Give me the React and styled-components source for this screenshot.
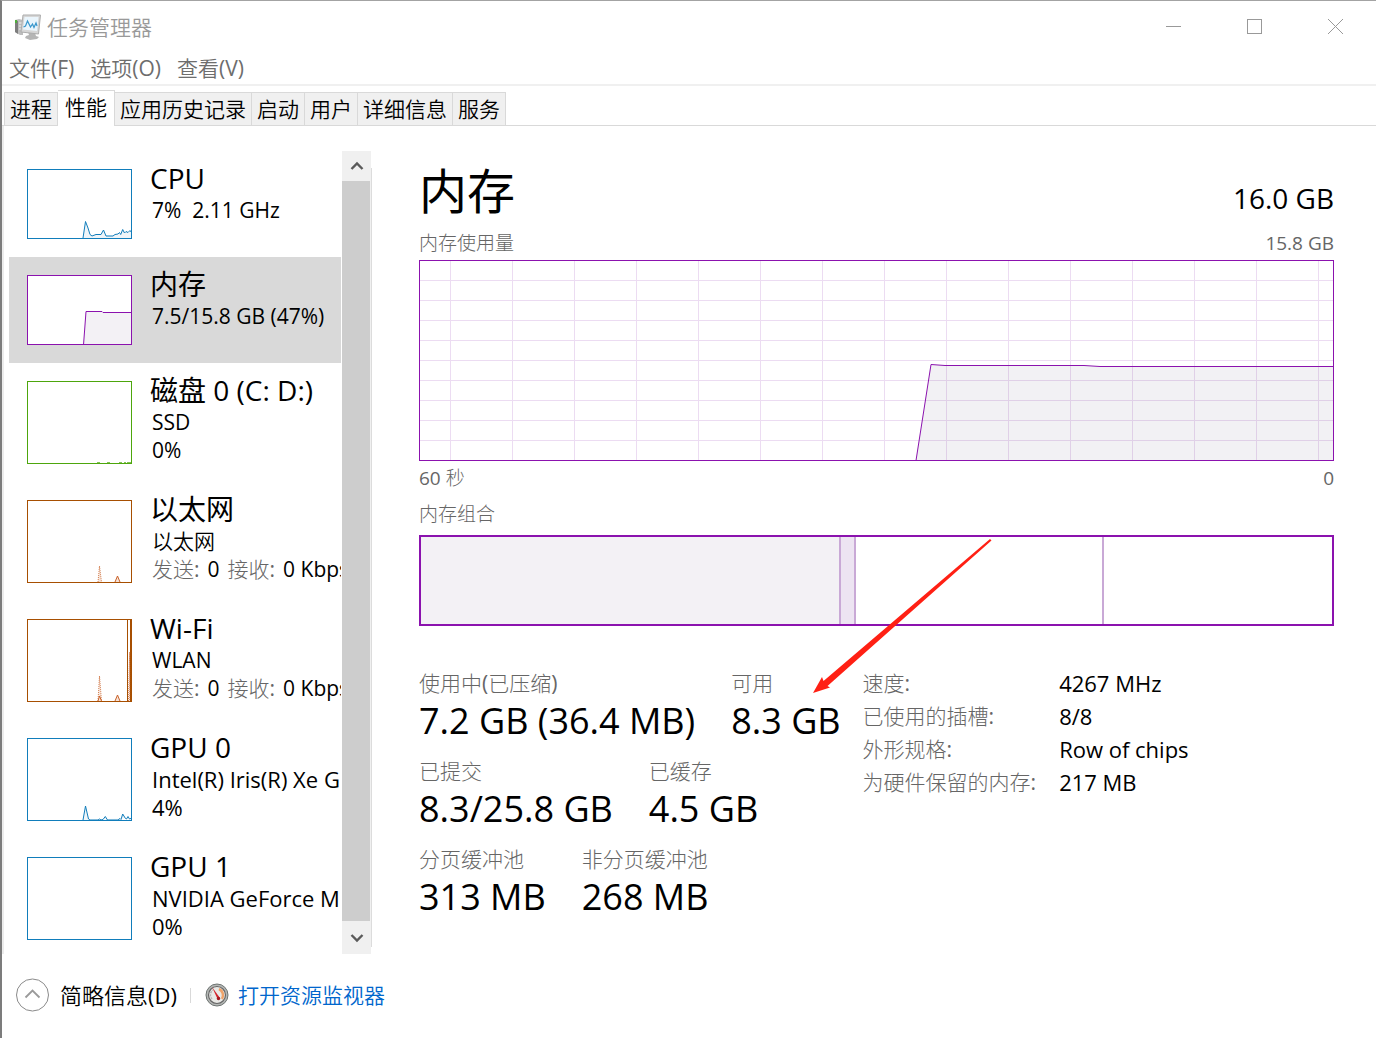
import React, {useRef, useState} from 'react'
import styled, {createGlobalStyle} from 'styled-components'

const thin = `'Open Sans', 'Noto Sans CJK SC Light', 'Noto Sans CJK SC', sans-serif`
const medium = `'Open Sans', 'Noto Sans CJK SC DemiLight', 'Noto Sans CJK SC', sans-serif`
const regular = `'Open Sans', 'Noto Sans CJK SC', sans-serif`

const GlobalStyle = createGlobalStyle`
  * {
    box-sizing: border-box;
  }
  body {
    margin: 0;
    background: #fff;
    color: #000;
    font-family: ${medium};
    font-size: 21px;
    line-height: 28px;
  }
  button {
    padding: 0;
    border: 0;
    background: none;
    color: inherit;
    font: inherit;
    text-align: left;
    cursor: default;
  }
`

const Window = styled.div`
  display: flex;
  flex-direction: column;
  height: 100vh;
  border-top: 1px solid #a3a3a3;
  border-left: 2px solid #7c7c7c;
`

const TitleBar = styled.header`
  display: flex;
  align-items: center;
  justify-content: space-between;
  height: 51px;
`

const Caption = styled.div`
  display: flex;
  align-items: center;
  gap: 6px;
  padding-left: 13px;
  color: #999;
`

const WindowButtons = styled.div`
  display: flex;
`

const WindowButton = styled.button`
  display: flex;
  align-items: center;
  justify-content: center;
  width: 81px;
  height: 51px;
  color: #999;
`

const MenuBar = styled.nav`
  display: flex;
  gap: 16px;
  height: 34px;
  padding: 0 7px;
  border-bottom: 2px solid #f0f0f0;
  color: #6d6d6d;
`

const TabBar = styled.div`
  display: flex;
  align-items: flex-end;
  height: 40px;
  padding-left: 2px;
  border-bottom: 1px solid #d9d9d9;
`

const Tab = styled.button`
  height: ${props => (props.$active ? 36 : 33)}px;
  margin-bottom: ${props => (props.$active ? -1 : 0)}px;
  padding: ${props => (props.$active ? '0 7px 3px' : '0 5px 1px')};
  border: 1px solid #d9d9d9;
  border-bottom: 0;
  border-left-width: ${props => (props.$first ? 1 : 0)}px;
  background: ${props => (props.$active ? '#fff' : '#f0f0f0')};
`

const Body = styled.main`
  display: flex;
  flex: 1;
  min-height: 0;
  padding: 25px 42px 0 5px;
  border-left: 2px solid #ececec;
`

const Sidebar = styled.aside`
  display: flex;
  flex: none;
  width: 363px;
`

const ResourceList = styled.div`
  flex: 1;
  min-width: 0;
  overflow: hidden;
`

const Resource = styled.button`
  display: flex;
  gap: 18px;
  width: 332px;
  padding: 18px 0 18px 18px;
  overflow: hidden;
  background: ${props => (props.$active ? '#d9d9d9' : 'transparent')};
`

const Thumb = styled.div`
  flex: none;
  width: 105px;
  height: ${props => props.$height}px;
  border: 1px solid ${props => props.$color};
  background: #fff;

  svg {
    display: block;
  }
`

const ResourceText = styled.div`
  display: flex;
  flex-direction: column;
  margin: -8px 0 -18px;
  white-space: pre;
`

const ResourceName = styled.span`
  font-family: ${regular};
  font-size: 28px;
  line-height: 35px;
`

const ResourceLine = styled.span`
  padding-left: 2px;
  font-size: ${props => props.$size}px;
`

const Muted = styled.span`
  color: #666;
  font-family: ${thin};
`

const TrafficLabel = styled(Muted)`
  margin-right: 8px;

  & + & {
    margin-left: 8px;
  }
`

const ScrollBar = styled.div`
  display: flex;
  flex-direction: column;
  width: 29px;
  background: #f0f0f0;
`

const ScrollButton = styled.button`
  display: flex;
  align-items: center;
  justify-content: center;
  height: ${props => props.$height}px;
`

const ScrollThumb = styled.div`
  flex: 1;
  margin-right: 1px;
  background: #cdcdcd;
`

const Divider = styled.div`
  width: 1px;
  margin: 17px 0 7px;
  background: #dcdcdc;
`

const Detail = styled.section`
  flex: 1;
  min-width: 0;
  padding: 8px 0 0 47px;
`

const Heading = styled.div`
  display: flex;
  justify-content: space-between;
  align-items: baseline;
  height: 70px;
`

const Title = styled.h1`
  margin: 0;
  font-family: ${regular};
  font-size: 48px;
  font-weight: 400;
  line-height: 64px;
`

const Total = styled.span`
  font-size: 28px;
  line-height: 36px;
`

const LabelRow = styled.div`
  display: flex;
  justify-content: space-between;
  margin-top: ${props => props.$top || 0}px;
  color: #666;
  font-family: ${thin};
  font-size: 19px;
`

const Chart = styled.div`
  height: 201px;
  margin: 3px 0;
  border: 1px solid #8b12ae;

  svg {
    display: block;
  }
`

const Composition = styled.div`
  position: relative;
  display: flex;
  height: 91px;
  margin-top: 7px;
  border: 2px solid #8b12ae;
`

const Segment = styled.div`
  flex: ${props => props.$share} 0 0;
  border-right: 2px solid #c9a9d6;
  background: ${props => props.$fill};

  &:last-of-type {
    border-right: 0;
  }
`

const Arrow = styled.svg`
  position: absolute;
  left: 391px;
  top: 1px;
  pointer-events: none;
`

const Stats = styled.div`
  display: flex;
  gap: 22px;
  margin-top: 43px;
`

const StatGrid = styled.div`
  display: flex;
  flex-direction: column;
  gap: 12px;
`

const StatRow = styled.div`
  display: flex;
  gap: 36px;
`

const Stat = styled.div`
  display: flex;
  flex-direction: column;
  white-space: nowrap;
`

const StatValue = styled.span`
  font-size: 36px;
  line-height: 48px;
`

const Facts = styled.table`
  align-self: flex-start;
  border-collapse: collapse;
  white-space: nowrap;

  th {
    padding: 0 23px 5px 0;
    color: #666;
    font-family: ${thin};
    font-weight: 400;
    text-align: left;
  }
  td {
    padding: 0 0 5px;
    font-size: 22px;
  }
`

const Footer = styled.footer`
  display: flex;
  align-items: center;
  height: 84px;
  padding: 0 0 2px 14px;
`

const FewerDetails = styled.button`
  display: flex;
  align-items: center;
  gap: 11px;
  font-size: 22px;
`

const FooterRule = styled.span`
  width: 1px;
  height: 15px;
  margin: 0 14px 0 13px;
  background: #d9d9d9;
`

const MonitorLink = styled.a`
  display: flex;
  align-items: center;
  gap: 9px;
  color: #0066cc;
  text-decoration: none;
`

const BLUE = '#117dbb'
const PURPLE = '#8b12ae'
const GREEN = '#4da60c'
const BROWN = '#a74f01'

const tabs = ['进程', '性能', '应用历史记录', '启动', '用户', '详细信息', '服务']

const traffic = (
  <>
    <TrafficLabel>发送:</TrafficLabel>0<TrafficLabel>接收:</TrafficLabel>0 Kbps
  </>
)

const resources = [
  {
    name: 'CPU',
    lines: ['7%  2.11 GHz'],
    size: 21,
    color: BLUE,
    height: 70,
    graph: (
      <polyline
        points="55,68 57.5,51.5 60,58 62,64.5 64,66 68,64.5 73,64.5 75.5,60 78,66 85,66 87,64.5 90,64 91.5,62.5 92.7,64.5 94.7,59.5 96.5,63 98,61.5 100,62.5 102,60.5 104,63 104,69 55,69"
        fill="#eff5f9"
        stroke={BLUE}
      />
    ),
  },
  {
    name: '内存',
    lines: ['7.5/15.8 GB (47%)'],
    size: 21,
    color: PURPLE,
    height: 70,
    graph: (
      <polyline
        points="55.5,69 58,35.5 74,35.5 75,36.5 104,36.5 104,69"
        fill="#f3f1f5"
        stroke={PURPLE}
      />
    ),
  },
  {
    name: '磁盘 0 (C: D:)',
    lines: ['SSD', '0%'],
    size: 21,
    color: GREEN,
    height: 83,
    graph: (
      <path
        d="M69 80.5h3M79 80.5h3M91 80.5h3M96 80.5h2M99 80.5h4"
        stroke={GREEN}
        strokeWidth="0.7"
      />
    ),
  },
  {
    name: '以太网',
    lines: ['以太网', traffic],
    size: 21,
    color: BROWN,
    height: 83,
    graph: (
      <g fill="#f6e3d8" stroke="#c9622a">
        <path d="M70 81L71.5 65L73.5 81" strokeWidth="0.8" strokeDasharray="1 1" />
        <path d="M87 81L89.5 75L92 81" />
      </g>
    ),
  },
  {
    name: 'Wi-Fi',
    lines: ['WLAN', traffic],
    size: 21,
    color: BROWN,
    height: 83,
    graph: (
      <g fill="#f6e3d8" stroke="#c9622a">
        <path d="M70 81L71.5 56L73.5 81" strokeWidth="0.8" strokeDasharray="1 1" />
        <path d="M70 81L71.5 76L73.5 81M87 81L89.5 75L92 81" />
        <path d="M99.5 81V0M102.5 0V81" fill="none" stroke={BROWN} />
        <path d="M100.5 81L101.7 32V81" strokeWidth="0.8" strokeDasharray="1 1" />
      </g>
    ),
  },
  {
    name: 'GPU 0',
    lines: ['Intel(R) Iris(R) Xe G', '4%'],
    size: 22,
    color: BLUE,
    height: 83,
    graph: (
      <polyline
        points="55,81 57.5,67 60.5,80 62,81 70,81 71.5,80 73,81 75,80.5 77.3,77.5 79.5,81 90,81 92,79.5 93,80.5 94.7,75 97.5,79.5 98.5,80 100,77.5 101.5,80 104,79"
        fill="#eff5f9"
        stroke={BLUE}
      />
    ),
  },
  {
    name: 'GPU 1',
    lines: ['NVIDIA GeForce M', '0%'],
    size: 22,
    color: BLUE,
    height: 83,
  },
]

const segments = [
  {share: 418, fill: '#f3f1f5'},
  {share: 13, fill: '#ede4f2'},
  {share: 246, fill: '#fff'},
  {share: 228, fill: '#fff'},
]

const stats = [
  [
    ['使用中(已压缩)', '7.2 GB (36.4 MB)'],
    ['可用', '8.3 GB'],
  ],
  [
    ['已提交', '8.3/25.8 GB'],
    ['已缓存', '4.5 GB'],
  ],
  [
    ['分页缓冲池', '313 MB'],
    ['非分页缓冲池', '268 MB'],
  ],
]

const facts = [
  ['速度:', '4267 MHz'],
  ['已使用的插槽:', '8/8'],
  ['外形规格:', 'Row of chips'],
  ['为硬件保留的内存:', '217 MB'],
]

const AppIcon = () => (
  <svg width="26" height="26" viewBox="0 0 26 26">
    <path d="M0 6l4-1 4 1v15H5l-5-3z" fill="#bdbdbd" />
    <path d="M0 6l3 1v13l-3-2z" fill="#7d7d7d" />
    <path d="M0 6h2v3H0z" fill="#4fae3c" />
    <path d="M4 9h3M4 12h3M4 15h3" stroke="#f1f1f1" />
    <path d="M13 18l7 1 1 3 3 1-2 2-7 1-5-2 1-2 3-1z" fill="#b5b5b5" />
    <path d="M8 1h17.5l-2 19-17.5-2z" fill="#d6d6d6" stroke="#adadad" />
    <path d="M9.5 3h14L22 17 8 15.500z" fill="#eaf5fc" />
    <path
      d="M8.5 13l2-1 2-5 3 6 2-3 1.5 3.5 2-4.5 1 3"
      fill="none"
      stroke="#3a97cc"
      strokeWidth="1.2"
    />
  </svg>
)

const GaugeIcon = () => (
  <svg width="24" height="24" viewBox="0 0 24 24">
    <circle cx="12" cy="12" r="11" fill="#b4b7b5" stroke="#6e7472" />
    <circle cx="12" cy="12" r="8.5" fill="#e9e9e6" stroke="#666" strokeWidth="1.2" />
    <path d="M14 6a7 7 0 0 1 3 10" fill="none" stroke="#f0a36a" strokeWidth="2.5" />
    <path
      d="M7 16a6 6 0 0 1 1-9"
      fill="none"
      stroke="#b8b8b8"
      strokeWidth="1.5"
      strokeDasharray="2 1"
    />
    <path d="M7 4l8 11-2 2z" fill="#d5232b" />
    <circle cx="13.5" cy="15.5" r="1.7" fill="#a31820" />
  </svg>
)

const Chevron = ({down}) => (
  <svg width="14" height="10" viewBox="0 0 14 10">
    <path
      d={down ? 'M1.5 2l5.5 5.5L12.5 2' : 'M1.5 8L7 2.5 12.5 8'}
      fill="none"
      stroke="#5a5a5a"
      strokeWidth="2.4"
    />
  </svg>
)

const UsageChart = () => (
  <Chart>
    <svg width="100%" height="199" viewBox="0 0 913 199" preserveAspectRatio="none">
      <defs>
        <pattern id="grid" x="30" y="19" width="62" height="20" patternUnits="userSpaceOnUse">
          <path d="M0 .5h62M.5 0v20" stroke="#ecdcf2" />
        </pattern>
      </defs>
      <rect width="913" height="199" fill="url(#grid)" />
      <path
        d="M496 199.5L511 103.5L525 104.5H664L680 105.5H914V200"
        fill="rgba(65, 40, 85, 0.065)"
        stroke={PURPLE}
      />
    </svg>
  </Chart>
)

function App() {
  const [tab, setTab] = useState('性能')
  const [selected, setSelected] = useState('内存')
  const list = useRef(null)

  const scroll = delta => list.current.scrollBy({top: delta})

  return (
    <Window>
      <GlobalStyle />
      <TitleBar>
        <Caption>
          <AppIcon />
          <span>任务管理器</span>
        </Caption>
        <WindowButtons>
          <WindowButton aria-label="最小化">
            <svg width="15" height="15">
              <path d="M0 7.5h15" stroke="currentColor" />
            </svg>
          </WindowButton>
          <WindowButton aria-label="最大化">
            <svg width="15" height="15">
              <rect x=".5" y=".5" width="14" height="14" fill="none" stroke="currentColor" />
            </svg>
          </WindowButton>
          <WindowButton aria-label="关闭">
            <svg width="15" height="15">
              <path d="M0 0l15 15M15 0L0 15" stroke="currentColor" />
            </svg>
          </WindowButton>
        </WindowButtons>
      </TitleBar>
      <MenuBar>
        <button>文件(F)</button>
        <button>选项(O)</button>
        <button>查看(V)</button>
      </MenuBar>
      <TabBar role="tablist">
        {tabs.map((name, idx) => (
          <Tab
            key={name}
            role="tab"
            aria-selected={tab === name}
            $active={tab === name}
            $first={idx === 0}
            onClick={() => setTab(name)}
          >
            {name}
          </Tab>
        ))}
      </TabBar>
      <Body>
        <Sidebar>
          <ResourceList ref={list}>
            {resources.map(({name, lines, size, color, height, graph}) => (
              <Resource
                key={name}
                $active={selected === name}
                onClick={() => setSelected(name)}
              >
                <Thumb $color={color} $height={height}>
                  <svg width="103" height={height - 2}>
                    {graph}
                  </svg>
                </Thumb>
                <ResourceText>
                  <ResourceName>{name}</ResourceName>
                  {lines.map((line, idx) => (
                    <ResourceLine key={idx} $size={size}>
                      {line}
                    </ResourceLine>
                  ))}
                </ResourceText>
              </Resource>
            ))}
          </ResourceList>
          <ScrollBar>
            <ScrollButton $height={30} aria-label="向上滚动" onClick={() => scroll(-40)}>
              <Chevron />
            </ScrollButton>
            <ScrollThumb />
            <ScrollButton $height={33} aria-label="向下滚动" onClick={() => scroll(40)}>
              <Chevron down />
            </ScrollButton>
          </ScrollBar>
          <Divider />
        </Sidebar>
        <Detail>
          <Heading>
            <Title>内存</Title>
            <Total>16.0 GB</Total>
          </Heading>
          <LabelRow>
            <span>内存使用量</span>
            <span>15.8 GB</span>
          </LabelRow>
          <UsageChart />
          <LabelRow>
            <span>60 秒</span>
            <span>0</span>
          </LabelRow>
          <LabelRow $top={8}>
            <span>内存组合</span>
          </LabelRow>
          <Composition>
            {segments.map(({share, fill}, idx) => (
              <Segment key={idx} $share={share} $fill={fill} />
            ))}
            <Arrow width="182" height="158" viewBox="0 0 182 158">
              <path
                d="M178 1L179.5 2.5L15.5 148L18 149.5L1 155L10 139L11.5 143Z"
                fill="#ff2014"
              />
            </Arrow>
          </Composition>
          <Stats>
            <StatGrid>
              {stats.map((row, idx) => (
                <StatRow key={idx}>
                  {row.map(([label, value]) => (
                    <Stat key={label}>
                      <Muted>{label}</Muted>
                      <StatValue>{value}</StatValue>
                    </Stat>
                  ))}
                </StatRow>
              ))}
            </StatGrid>
            <Facts>
              <tbody>
                {facts.map(([label, value]) => (
                  <tr key={label}>
                    <th scope="row">{label}</th>
                    <td>{value}</td>
                  </tr>
                ))}
              </tbody>
            </Facts>
          </Stats>
        </Detail>
      </Body>
      <Footer>
        <FewerDetails>
          <svg width="33" height="34" viewBox="0 0 33 34">
            <circle cx="16.5" cy="17" r="16" fill="none" stroke="#8a8a8a" />
            <path d="M9.5 19.5l7-7 7 7" fill="none" stroke="#9a9a9a" strokeWidth="1.8" />
          </svg>
          简略信息(D)
        </FewerDetails>
        <FooterRule />
        <MonitorLink href="#resmon">
          <GaugeIcon />
          打开资源监视器
        </MonitorLink>
      </Footer>
    </Window>
  )
}

export default App
